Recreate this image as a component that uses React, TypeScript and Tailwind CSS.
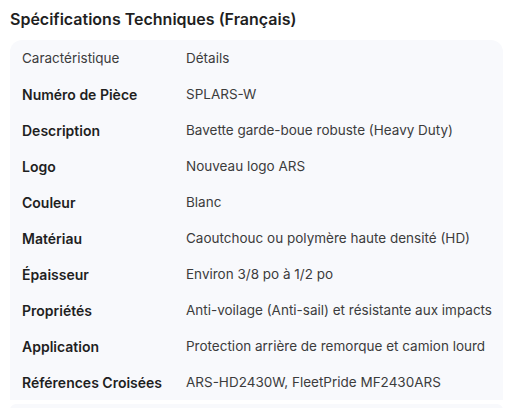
import React from 'react';

const ROWS: [string, string][] = [
  ['Numéro de Pièce', 'SPLARS-W'],
  ['Description', 'Bavette garde-boue robuste (Heavy Duty)'],
  ['Logo', 'Nouveau logo ARS'],
  ['Couleur', 'Blanc'],
  ['Matériau', 'Caoutchouc ou polymère haute densité (HD)'],
  ['Épaisseur', 'Environ 3/8 po à 1/2 po'],
  ['Propriétés', 'Anti-voilage (Anti-sail) et résistante aux impacts'],
  ['Application', 'Protection arrière de remorque et camion lourd'],
  ['Références Croisées', 'ARS-HD2430W, FleetPride MF2430ARS'],
];

const App = () => {
  return (
    <div className="w-[512px] h-[408px] overflow-hidden bg-white font-['Inter',sans-serif] text-[#1f1f1f]">
      <h2 className="pl-[10px] pt-[8px] h-[40px] text-[16px] font-semibold leading-[22px]">
        Spécifications Techniques (Français)
      </h2>
      <div className="ml-[10px] w-[493px] rounded-t-[12px] bg-[#f8f9fc]">
        <table className="w-full text-[13.5px] border-collapse whitespace-nowrap">
          <thead>
            <tr className="h-[36px]">
              <th className="pl-[12px] w-[176px] text-left font-normal text-[#3c3c3c]">Caractéristique</th>
              <th className="text-left font-normal text-[#3c3c3c]">Détails</th>
            </tr>
          </thead>
          <tbody>
            {ROWS.map(([k, v]) => (
              <tr key={k} className="h-[36px]">
                <td className="pl-[12px] text-[14px] font-semibold">{k}</td>
                <td className="text-[#3c3c3c]">{v}</td>
              </tr>
            ))}
          </tbody>
        </table>
      </div>
      <div className="mt-[4px] ml-[10px] w-[493px] h-[10px] rounded-t-[6px] bg-[#f8f9fc]" />
    </div>
  );
};

export default App;
